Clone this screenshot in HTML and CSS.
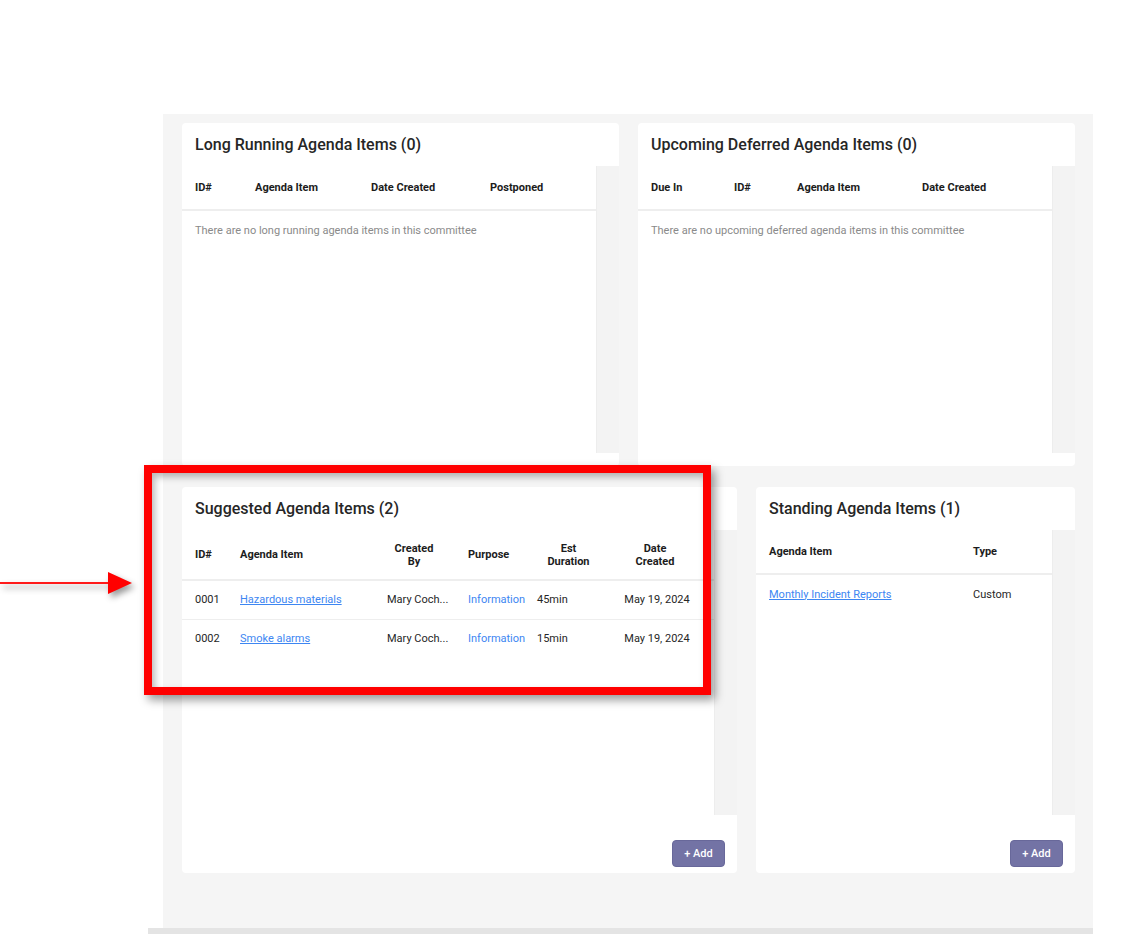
FILE: index.html
```html
<!DOCTYPE html>
<html lang="en">
<head>
<meta charset="utf-8">
<title>Committee Agenda Items</title>
<link rel="stylesheet" href="styles.css">
</head>
<body>
<div class="page">
  <div class="panel">
    <div class="grid grid-top">
      <section class="card card-top">
        <div class="card-head"><h2>Long Running Agenda Items (0)</h2></div>
        <div class="card-body">
          <div class="table-wrap">
            <table>
              <colgroup><col class="c73"><col class="c116"><col class="c119"><col></colgroup>
              <thead><tr><th>ID#</th><th>Agenda Item</th><th>Date Created</th><th>Postponed</th></tr></thead>
              <tbody><tr class="empty"><td colspan="4">There are no long running agenda items in this committee</td></tr></tbody>
            </table>
          </div>
          <div class="scroll-track"></div>
        </div>
        <div class="card-foot"></div>
      </section>
      <section class="card card-top">
        <div class="card-head"><h2>Upcoming Deferred Agenda Items (0)</h2></div>
        <div class="card-body">
          <div class="table-wrap">
            <table>
              <colgroup><col class="c96"><col class="c63"><col class="c125"><col></colgroup>
              <thead><tr><th>Due In</th><th>ID#</th><th>Agenda Item</th><th>Date Created</th></tr></thead>
              <tbody><tr class="empty"><td colspan="4">There are no upcoming deferred agenda items in this committee</td></tr></tbody>
            </table>
          </div>
          <div class="scroll-track"></div>
        </div>
        <div class="card-foot"></div>
      </section>
    </div>
    <div class="grid grid-bottom">
      <section class="card card-bottom">
        <div class="card-head"><h2>Suggested Agenda Items (2)</h2></div>
        <div class="card-body">
          <div class="table-wrap">
            <table class="tall-head">
              <colgroup><col class="c58"><col class="c147"><col class="c81"><col class="c69"><col class="c63"><col></colgroup>
              <thead><tr><th>ID#</th><th>Agenda Item</th><th class="center by">Created<br>By</th><th>Purpose</th><th class="center">Est<br>Duration</th><th class="center last">Date<br>Created</th></tr></thead>
              <tbody>
                <tr><td>0001</td><td><a href="#">Hazardous materials</a></td><td>Mary Coch...</td><td class="purpose">Information</td><td>45min</td><td class="center">May 19, 2024</td></tr>
                <tr class="no-line"><td>0002</td><td><a href="#">Smoke alarms</a></td><td>Mary Coch...</td><td class="purpose">Information</td><td>15min</td><td class="center">May 19, 2024</td></tr>
              </tbody>
            </table>
          </div>
          <div class="scroll-track"></div>
        </div>
        <div class="card-foot"><button class="add-btn">+ Add</button></div>
      </section>
      <section class="card card-bottom">
        <div class="card-head"><h2>Standing Agenda Items (1)</h2></div>
        <div class="card-body">
          <div class="table-wrap">
            <table>
              <colgroup><col class="c217"><col></colgroup>
              <thead><tr><th>Agenda Item</th><th>Type</th></tr></thead>
              <tbody><tr class="no-line"><td><a href="#">Monthly Incident Reports</a></td><td>Custom</td></tr></tbody>
            </table>
          </div>
          <div class="scroll-track"></div>
        </div>
        <div class="card-foot"><button class="add-btn">+ Add</button></div>
      </section>
    </div>
  </div>
  <div class="baseline"></div>

  <div class="highlight"></div>
  <svg class="arrow" width="140" height="30" viewBox="0 0 140 30" aria-hidden="true">
    <line x1="0" y1="13" x2="112" y2="13" stroke="#ff1a1a" stroke-width="2"/>
    <polygon points="108,2 132,13 108,24" fill="#ff0000"/>
  </svg>
</div>
</body>
</html>
```

FILE: styles.css
```css
* { box-sizing: border-box; }

html, body {
  margin: 0;
  padding: 0;
  background: #ffffff;
}

body {
  font-family: Roboto, "Liberation Sans", Arial, sans-serif;
  color: #222222;
}

.page {
  position: relative;
  width: 1142px;
  height: 941px;
  padding-top: 114px;
}

.panel {
  margin-left: 163px;
  width: 930px;
  height: 814px;
  background: #f5f5f5;
  padding: 9px 18px 0 19px;
}

.grid {
  display: grid;
  column-gap: 19px;
}

.grid-top {
  grid-template-columns: 437px 437px;
  height: 343px;
}

.grid-bottom {
  grid-template-columns: 555px 319px;
  height: 386px;
  margin-top: 21px;
}

.card {
  display: flex;
  flex-direction: column;
  background: #ffffff;
  border-radius: 4px;
  overflow: hidden;
}

.card-head {
  height: 43px;
  flex: 0 0 43px;
  display: flex;
  align-items: center;
  padding-left: 13px;
}

.card-head h2 {
  margin: 0;
  font-size: 16px;
  font-weight: 500;
  color: #262626;
  letter-spacing: 0;
}

.card-body {
  flex: 1 1 auto;
  display: flex;
  min-height: 0;
}

.table-wrap {
  flex: 1 1 auto;
  background: #ffffff;
}

.scroll-track {
  flex: 0 0 23px;
  background: #f3f3f3;
  border-left: 1px solid #ededed;
}

.card-top .card-foot {
  flex: 0 0 13px;
}

.card-bottom .card-foot {
  flex: 0 0 58px;
  display: flex;
  justify-content: flex-end;
  align-items: flex-end;
  padding: 0 12px 6px 0;
}

table {
  width: 100%;
  border-collapse: collapse;
  table-layout: fixed;
  font-size: 11px;
}

.c58 { width: 58px; }
.c63 { width: 63px; }
.c69 { width: 69px; }
.c73 { width: 73px; }
.c81 { width: 81px; }
.c96 { width: 96px; }
.c116 { width: 116px; }
.c119 { width: 119px; }
.c125 { width: 125px; }
.c147 { width: 147px; }
.c217 { width: 217px; }

th {
  height: 44px;
  padding: 0;
  text-align: left;
  vertical-align: middle;
  font-weight: 700;
  color: #1c1c1c;
  line-height: 13px;
  border-bottom: 2px solid #eeeeee;
  white-space: nowrap;
}

.tall-head th {
  height: 50px;
}

th:first-child,
td:first-child {
  padding-left: 13px;
}

td {
  height: 39px;
  padding: 0;
  vertical-align: middle;
  color: #262626;
  white-space: nowrap;
  border-bottom: 1px solid #eeeeee;
}

tr.no-line td {
  border-bottom: none;
}

tr.empty td {
  height: 40px;
  color: #8a8a8a;
  border-bottom: none;
}

.center {
  text-align: center;
}

th.by {
  padding-right: 27px;
}

th.last {
  padding-right: 4px;
}

td a {
  color: #3d86f2;
  text-decoration: underline;
}

td.purpose {
  color: #3d86f2;
}

.add-btn {
  width: 53px;
  height: 27px;
  border: 1px solid #68689a;
  border-radius: 4px;
  background: #7373a5;
  color: #ffffff;
  font-family: Roboto, "Liberation Sans", Arial, sans-serif;
  font-size: 11px;
  font-weight: 500;
  padding: 0;
  cursor: pointer;
}

.baseline {
  margin-left: 148px;
  width: 945px;
  height: 6px;
  background: #e4e4e4;
}

.highlight {
  position: absolute;
  left: 144px;
  top: 465px;
  width: 567px;
  height: 230px;
  border: 8px solid #ff0000;
  box-shadow: 4px 5px 9px rgba(0, 0, 0, 0.4), inset 3px 4px 7px rgba(0, 0, 0, 0.28);
  pointer-events: none;
}

.arrow {
  position: absolute;
  left: 0;
  top: 570px;
  filter: drop-shadow(3px 4px 3px rgba(0, 0, 0, 0.4));
}
```
